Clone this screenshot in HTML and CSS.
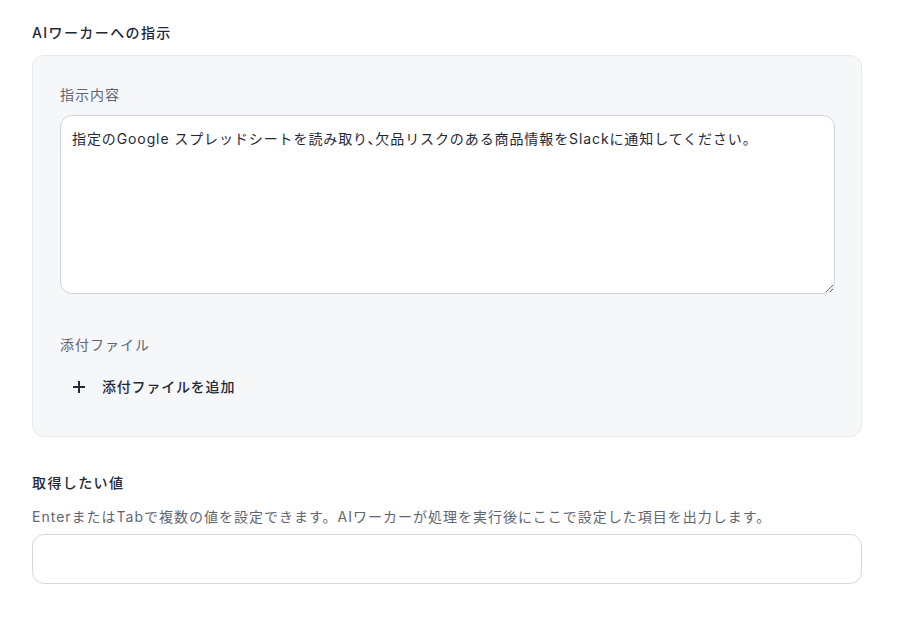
FILE: index.html
```html
<!DOCTYPE html>
<html lang="ja">
<head>
<meta charset="utf-8">
<link rel="stylesheet" href="styles.css">
</head>
<body>
<div class="page">
  <section class="section">
    <h2 class="section-title">AIワーカーへの指示</h2>
    <div class="card">
      <div class="field">
        <label class="field-label">指示内容</label>
        <textarea class="textarea">指定のGoogle スプレッドシートを読み取り、欠品リスクのある商品情報をSlackに通知してください。</textarea>
      </div>
      <div class="field attach">
        <div class="field-label">添付ファイル</div>
        <button class="add-btn" type="button">
          <svg class="plus" width="14" height="14" viewBox="0 0 14 14"><path d="M7 1v12M1 7h12" stroke="#1f2937" stroke-width="2" fill="none"/></svg>
          <span>添付ファイルを追加</span>
        </button>
      </div>
    </div>
  </section>
  <section class="section second">
    <h2 class="section-title">取得したい値</h2>
    <p class="help">EnterまたはTabで複数の値を設定できます。AIワーカーが処理を実行後にここで設定した項目を出力します。</p>
    <div class="tag-input"></div>
  </section>
</div>
</body>
</html>
```
FILE: styles.css
```css
* { box-sizing: border-box; }
html, body { margin: 0; padding: 0; background: #fff; }
body {
  font-family: Inter, "Noto Sans CJK JP", sans-serif;
  font-size: 14px;
  color: #1f2937;
  letter-spacing: 1px;
}
.page { padding: 23px 35px 0 32px; }
.section-title {
  margin: 0;
  font-size: 14px;
  font-weight: 500;
  line-height: 20px;
  letter-spacing: 1.4px;
  color: #1f2937;
}
.card {
  margin-top: 12px;
  background: #f6f7f9;
  border: 1px solid #e7e9ed;
  border-radius: 12px;
  padding: 29px 26px 37px 27px;
}
.field-label {
  display: block;
  font-size: 14px;
  line-height: 20px;
  color: #5f6672;
}
.textarea {
  display: block;
  width: 100%;
  height: 179px;
  margin-top: 10px;
  padding: 13px 11px;
  border: 1px solid #cfd3da;
  border-radius: 12px;
  background: #fff;
  font-family: inherit;
  font-size: 14px;
  letter-spacing: 0.9px;
  font-feature-settings: "halt";
  line-height: 20px;
  color: #1f2937;
  resize: vertical;
}
.attach { margin-top: 41px; }
.add-btn {
  display: flex;
  align-items: center;
  gap: 16px;
  margin-top: 20px;
  padding: 0 0 0 12px;
  border: 0;
  background: transparent;
  font-family: inherit;
  font-size: 14px;
  font-weight: 500;
  letter-spacing: 0.8px;
  line-height: 24px;
  color: #1f2937;
}
.plus { display: block; }
.second { margin-top: 36px; }
.help {
  margin: 14px 0 0;
  font-size: 14px;
  line-height: 20px;
  color: #5f6672;
}
.tag-input {
  margin-top: 7px;
  height: 50px;
  border: 1px solid #d4d8de;
  border-radius: 12px;
  background: #fff;
}
```
